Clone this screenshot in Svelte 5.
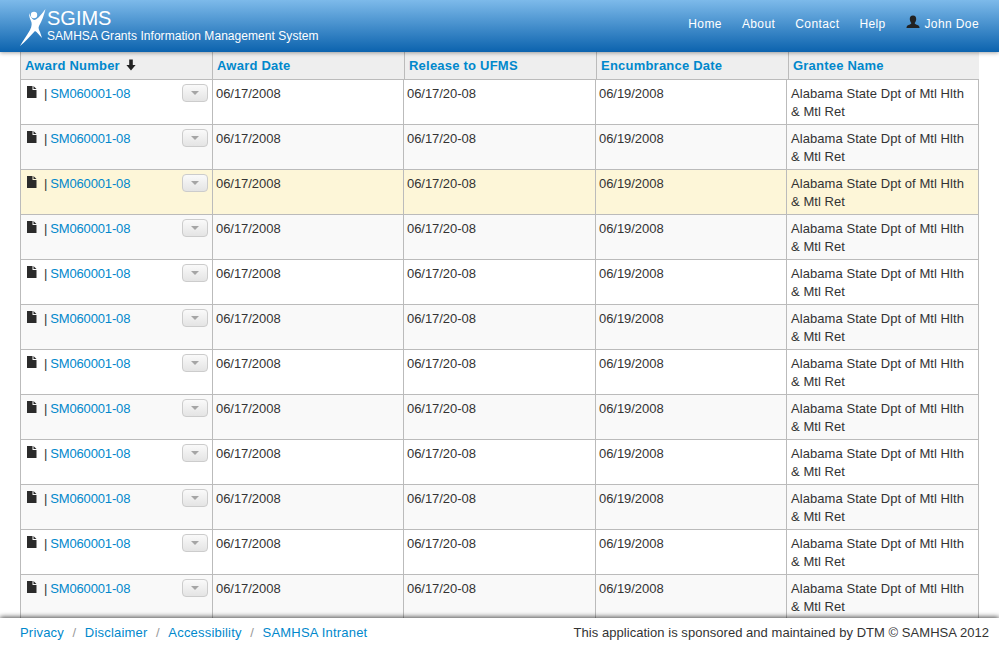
<script>
  const columns = [
    { label: 'Award Number', sorted: true },
    { label: 'Award Date' },
    { label: 'Release to UFMS' },
    { label: 'Encumbrance Date' },
    { label: 'Grantee Name' }
  ]
  const rows = Array.from({ length: 12 }, (_, i) => ({
    id: i,
    number: 'SM060001-08',
    awardDate: '06/17/2008',
    release: '06/17/20-08',
    encumbrance: '06/19/2008',
    grantee: 'Alabama State Dpt of Mtl Hlth & Mtl Ret',
    selected: i === 2
  }))
  const links = ['Privacy', 'Disclaimer', 'Accessibility', 'SAMHSA Intranet']
  const nav = ['Home', 'About', 'Contact', 'Help']
</script>

<div class="page">
  <header class="topbar">
    <div class="brand">
      <svg class="logo" width="27" height="38" viewBox="0 0 27 38">
        <circle cx="14" cy="7" r="3.2" fill="#fff" />
        <path d="M9 5 C10 8 12 11 14 12 C17 12 20 8 25.5 1 C24 7 22 13 19 18 C18 20 19 22 20 24 L22 30 C19 27 17 24 15 23 C10 28 5 34 0 38 C3 33 7 27 10 22 C12 18 12 15 11 13 C10 11 9 8 9 5 Z" fill="#fff" />
      </svg>
      <div class="brand-text">
        <div class="brand-name">SGIMS</div>
        <div class="brand-sub">SAMHSA Grants Information Management System</div>
      </div>
    </div>
    <nav class="nav">
      {#each nav as item}
        <a href="#top">{item}</a>
      {/each}
      <a href="#top" class="user">
        <svg width="14" height="14" viewBox="0 0 14 14">
          <path d="M7 0.5 C9.3 0.5 10.3 2.2 10.2 4.2 C10.1 5.8 9.5 7 8.8 7.8 C8.6 8.6 9 9 10 9.4 C12 10 13.5 10.6 13.5 12.5 L13.5 13 L0.5 13 L0.5 12.5 C0.5 10.6 2 10 4 9.4 C5 9 5.4 8.6 5.2 7.8 C4.5 7 3.9 5.8 3.8 4.2 C3.7 2.2 4.7 0.5 7 0.5 Z" fill="#222" />
        </svg>
        John Doe
      </a>
    </nav>
  </header>

  <main class="content">
    <div class="head">
      {#each columns as col}
        <div class="th">
          {col.label}
          {#if col.sorted}
            <svg class="sort" width="10" height="12" viewBox="0 0 10 12">
              <path d="M3.2 0.5 H6.8 V6 H9.6 L5 11.5 L0.4 6 H3.2 Z" fill="#222" />
            </svg>
          {/if}
        </div>
      {/each}
    </div>
    <div class="body">
      {#each rows as row}
        <div class="row" class:odd={row.id % 2 === 1} class:selected={row.selected}>
          <div class="td first">
            <svg class="doc" width="10" height="12" viewBox="0 0 10 12">
              <path d="M0 0 H5.5 V4 H9.5 V12 H0 Z M6.5 0 L9.5 3 H6.5 Z" fill="#2b2b2b" />
            </svg>
            <span class="sep">|</span>
            <a href="#top">{row.number}</a>
            <button class="menu" type="button" aria-label="Actions"><span class="caret"></span></button>
          </div>
          <div class="td">{row.awardDate}</div>
          <div class="td">{row.release}</div>
          <div class="td">{row.encumbrance}</div>
          <div class="td last">{row.grantee}</div>
        </div>
      {/each}
    </div>
  </main>

  <footer class="footer">
    <div class="links">
      {#each links as link, i}
        {#if i > 0}<span class="slash">/</span>{/if}
        <a href="#top">{link}</a>
      {/each}
    </div>
    <div class="sponsor">This application is sponsored and maintained by DTM © SAMHSA 2012</div>
  </footer>
</div>

<style>
  :global(body) {
    margin: 0;
    background: #fff;
  }
  .page {
    display: flex;
    flex-direction: column;
    height: 648px;
    overflow: hidden;
    font-family: "Liberation Sans", Arial, sans-serif;
    font-size: 13px;
    line-height: 18px;
    color: #333;
  }
  a {
    text-decoration: none;
    color: #0088cc;
  }
  .topbar {
    position: relative;
    z-index: 2;
    flex: none;
    height: 52px;
    display: flex;
    justify-content: space-between;
    background: linear-gradient(#7dbaea, #0c63ae);
    box-shadow: 0 1px 4px rgba(0, 0, 0, 0.35);
  }
  .brand {
    display: flex;
    padding: 8px 0 0 20px;
  }
  .brand-text {
    color: #fff;
  }
  .brand-name {
    font-size: 20px;
    line-height: 20px;
  }
  .brand-sub {
    font-size: 12px;
    line-height: 16px;
    letter-spacing: 0.05px;
  }
  .nav {
    display: flex;
    gap: 20px;
    padding: 15px 20px 0 0;
  }
  .nav a {
    color: #fff;
    font-size: 12px;
    letter-spacing: 0.4px;
  }
  .user svg {
    vertical-align: -1px;
    margin-right: 1px;
  }
  .content {
    flex: 1;
    min-height: 0;
    overflow: hidden;
    margin: 0 20px;
    width: 959px;
  }
  .head {
    display: grid;
    grid-template-columns: 192px 192px 192px 192px 191px;
    height: 27px;
    background: #eeeeee;
    border-bottom: 1px solid #bbb;
  }
  .th {
    border-left: 1px solid #bbb;
    padding: 5px 0 0 4px;
    font-weight: bold;
    color: #0088cc;
    letter-spacing: 0.22px;
    white-space: nowrap;
  }
  .sort {
    vertical-align: -1px;
    margin-left: 2px;
  }
  .row {
    display: grid;
    grid-template-columns: 192px 191px 192px 191px 193px;
    height: 44px;
    border-bottom: 1px solid #bbb;
    background: #fff;
  }
  .odd {
    background: #f9f9f9;
  }
  .selected {
    background: #fdf6d8;
  }
  .td {
    border-left: 1px solid #bbb;
    padding: 5px 8px 0 3px;
    letter-spacing: -0.05px;
  }
  .first {
    display: flex;
    align-items: flex-start;
    padding-left: 6px;
    padding-right: 4px;
    letter-spacing: -0.15px;
  }
  .last {
    border-right: 1px solid #bbb;
    padding-left: 4px;
    letter-spacing: 0.06px;
  }
  .doc {
    margin-top: 1px;
  }
  .sep {
    margin: 0 3px 0 7px;
  }
  .menu {
    margin: -1px 0 0 auto;
    width: 26px;
    height: 18px;
    padding: 0;
    display: flex;
    align-items: center;
    justify-content: center;
    border: 1px solid #ccc;
    border-radius: 4px;
    background: linear-gradient(#fafafa, #e4e4e4);
  }
  .caret {
    width: 0;
    height: 0;
    border-left: 4px solid transparent;
    border-right: 4px solid transparent;
    border-top: 4px solid #a5a5a5;
  }
  .footer {
    position: relative;
    z-index: 2;
    flex: none;
    height: 30px;
    display: flex;
    justify-content: space-between;
    align-items: center;
    padding: 0 10px 0 20px;
    background: #fff;
    box-shadow: 0 -1px 5px rgba(0, 0, 0, 0.7);
  }
  .links {
    display: flex;
    gap: 8.5px;
    letter-spacing: 0.2px;
  }
  .slash {
    color: #999;
  }
  .sponsor {
    letter-spacing: 0.04px;
    color: #333;
  }
</style>
